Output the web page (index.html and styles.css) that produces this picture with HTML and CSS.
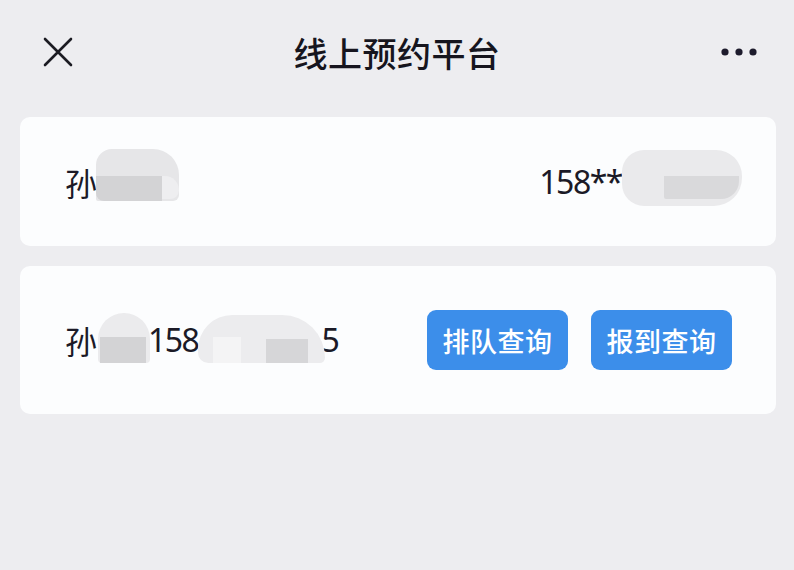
FILE: index.html
```html
<!DOCTYPE html>
<html lang="zh-CN">
<head>
<meta charset="utf-8">
<title>线上预约平台</title>
<link rel="stylesheet" href="styles.css">
</head>
<body>
<div class="page">
  <header class="nav">
    <svg class="close" width="30" height="30" viewBox="0 0 30 30"><path d="M2 2 L28 28 M28 2 L2 28" stroke="#1b1b22" stroke-width="2.6" stroke-linecap="round" fill="none"/></svg>
    <h1 class="title">线上预约平台</h1>
    <svg class="more" width="36" height="10" viewBox="0 0 36 10"><circle cx="4" cy="5" r="3.6" fill="#1d1b2c"/><circle cx="18" cy="5" r="3.6" fill="#1d1b2c"/><circle cx="32" cy="5" r="3.6" fill="#1d1b2c"/></svg>
  </header>
  <main class="content">
    <section class="card card-a">
      <div class="left">
        <span class="txt">孙</span>
        <span class="blob blob-a1"><span class="dark d-a1"></span><span class="light l-a1"></span></span>
      </div>
      <div class="right">
        <span class="txt num">158**</span>
        <span class="blob blob-a2"><span class="dark d-a2"></span></span>
      </div>
    </section>
    <section class="card card-b">
      <div class="left">
        <span class="txt">孙</span>
        <span class="blob blob-b1"><span class="dark d-b1"></span></span>
        <span class="txt num">158</span>
        <span class="blob blob-b2"><span class="pale p-b2"></span><span class="dark d-b2"></span></span>
        <span class="txt num five">5</span>
      </div>
      <div class="actions">
        <button class="btn">排队查询</button>
        <button class="btn">报到查询</button>
      </div>
    </section>
  </main>
</div>
</body>
</html>
```

FILE: styles.css
```css
* { box-sizing: border-box; }
html, body { margin: 0; padding: 0; }
body {
  background: #ededf0;
  font-family: "Noto Sans CJK SC", "Noto Sans", sans-serif;
  color: #1b1a27;
  width: 794px;
  height: 570px;
  overflow: hidden;
}
.page { width: 794px; }
.nav {
  height: 104px;
  display: flex;
  align-items: center;
  justify-content: space-between;
  padding: 0 37px 0 43px;
}
.close { display: block; }
.title {
  margin: 0;
  font-size: 34px;
  font-weight: 500;
  letter-spacing: 0.5px;
  color: #16151e;
}
.more { display: block; }
.content {
  padding: 13px 18px 0 20px;
  display: flex;
  flex-direction: column;
  gap: 20px;
}
.card {
  background: #fcfdfe;
  border-radius: 10px;
  display: flex;
  align-items: center;
  justify-content: space-between;
  padding: 0 34px 0 45px;
}
.card-a { height: 129px; }
.card-b { height: 148px; padding-right: 44px; }
.left, .right { display: flex; align-items: center; }
.txt { font-size: 32px; line-height: 40px; font-family: "Noto Sans CJK SC", sans-serif; font-weight: 400; }
.num { font-family: "Noto Sans", "Noto Sans CJK SC", sans-serif; letter-spacing: -1.5px; }
.right .num { margin-left: 3px; }
.blob {
  position: relative;
  display: inline-block;
  background: #e9e9eb;
}
.dark { position: absolute; background: #d3d3d5; }
.light { position: absolute; background: #ececee; }
.pale { position: absolute; background: #f4f4f5; }
.blob-a1 { width: 83px; height: 52px; margin-left: -1px; margin-top: -14px; border-radius: 16px 26px 6px 2px; background: #e6e6e8; }
.d-a1 { left: 0; top: 27px; width: 66px; height: 25px; border-radius: 0 0 0 8px; }
.l-a1 { left: 66px; top: 27px; width: 17px; height: 23px; border-radius: 0 16px 10px 0; background: #eeeef0; }
.blob-a2 { width: 120px; height: 56px; margin-left: 0; margin-top: -8px; border-radius: 22px 26px 28px 22px; background: #eaeaec; }
.d-a2 { left: 42px; top: 26px; width: 75px; height: 23px; border-radius: 0 0 18px 2px; background: #d9d9db; }
.blob-b1 { width: 52px; height: 50px; margin-left: 1px; margin-right: -2px; border-radius: 26px 26px 4px 4px; background: #ebebed; margin-top: -4px; }
.d-b1 { left: 2px; top: 24px; width: 46px; height: 26px; background: #d3d3d5; }
.blob-b2 { width: 127px; height: 48px; margin-top: -2px; border-radius: 40px 50px 6px 12px; background: #ececee; }
.p-b2 { left: 15px; top: 22px; width: 28px; height: 26px; }
.d-b2 { left: 68px; top: 24px; width: 42px; height: 24px; background: #d6d6d8; }
.five { margin-left: -4px; }
.actions { display: flex; gap: 23px; }
.btn {
  width: 141px;
  height: 60px;
  border: none;
  border-radius: 9px;
  background: #3c8eea;
  color: #fff;
  font-family: "Noto Sans CJK SC", sans-serif;
  font-size: 27px;
  font-weight: 500;
  letter-spacing: 0.5px;
  padding: 0;
}
```
